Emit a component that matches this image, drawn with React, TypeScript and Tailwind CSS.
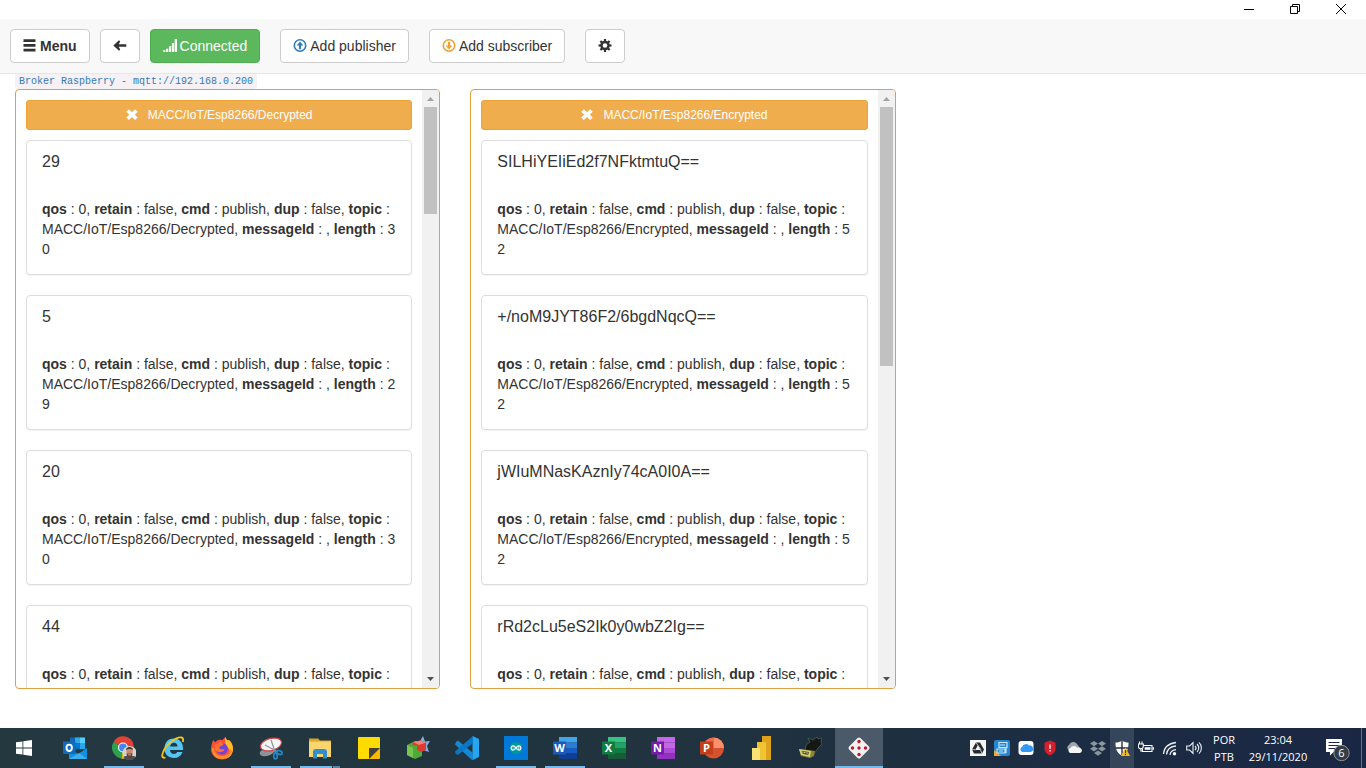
import React from "react";

type Message = { payload: string; length: number };
type Subscription = { topic: string; thumb: string; messages: Message[] };

const subscriptions: Subscription[] = [
  {
    topic: "MACC/IoT/Esp8266/Decrypted",
    thumb: "h-[19%]",
    messages: [
      { payload: "29", length: 30 },
      { payload: "5", length: 29 },
      { payload: "20", length: 30 },
      { payload: "44", length: 30 },
    ],
  },
  {
    topic: "MACC/IoT/Esp8266/Encrypted",
    thumb: "h-[46%]",
    messages: [
      { payload: "SILHiYEIiEd2f7NFktmtuQ==", length: 52 },
      { payload: "+/noM9JYT86F2/6bgdNqcQ==", length: 52 },
      { payload: "jWIuMNasKAznIy74cA0I0A==", length: 52 },
      { payload: "rRd2cLu5eS2Ik0y0wbZ2Ig==", length: 52 },
    ],
  },
];

function Glyph({ children, className = "size-[14px]" }: { children: React.ReactNode; className?: string }) {
  return (
    <svg viewBox="0 0 14 14" aria-hidden="true" className={"shrink-0 " + className}>
      {children}
    </svg>
  );
}

const BurgerGlyph = () => (
  <Glyph>
    <path fill="currentColor" d="M.5.3h12v2.800h-12zM.5 5h12v2.800h-12zM.5 9.700h12v2.800h-12z" />
  </Glyph>
);
const ArrowLeftGlyph = () => (
  <Glyph>
    <path fill="currentColor" d="M.3 6.500 6 1.300 7.200 2.400 5.700 5.200h7.600v2.600H5.700l1.500 2.800L6 11.700z" />
  </Glyph>
);
const SignalGlyph = () => (
  <Glyph>
    <path fill="currentColor" d="M.2 11.2h2.200v1.800H.2zM3.100 9.700h2.200V13H3.100zM6 7.300h2.200V13H6zM8.900 4h2.200v9H8.900zM11.700 0H14v13h-2.300z" />
  </Glyph>
);
const UploadGlyph = () => (
  <Glyph className="size-[14px] text-[#337ab7]">
    <circle cx="7" cy="6.500" r="5.700" fill="none" stroke="currentColor" strokeWidth="1.600" />
    <path fill="currentColor" d="M7 2.500 10.300 6.500H8.100v3.700H5.900V6.500H3.700z" />
  </Glyph>
);
const DownloadGlyph = () => (
  <Glyph className="size-[14px] text-[#eea236]">
    <circle cx="7" cy="6.500" r="5.700" fill="none" stroke="currentColor" strokeWidth="1.600" />
    <path fill="currentColor" d="M7 10.500 10.300 6.500H8.100V2.800H5.900v3.700H3.700z" />
  </Glyph>
);
const CogGlyph = () => (
  <Glyph>
    <g fill="currentColor">
      <path d="M5.900 0h2.200v13H5.900z" />
      <path d="M5.900 0h2.200v13H5.900z" transform="rotate(45 7 6.500)" />
      <path d="M5.900 0h2.200v13H5.900z" transform="rotate(90 7 6.500)" />
      <path d="M5.900 0h2.200v13H5.900z" transform="rotate(135 7 6.500)" />
      <circle cx="7" cy="6.500" r="4.800" />
    </g>
    <circle cx="7" cy="6.500" r="2.300" fill="#fff" />
  </Glyph>
);
const RemoveGlyph = () => (
  <Glyph className="size-3">
    <path fill="currentColor" d="M3.300.300 7 3.800 10.700.300l3 3L10.200 6.500l3.500 3.300-3 3L7 9.300l-3.700 3.500-3-3L3.800 6.500.300 3.300z" />
  </Glyph>
);

const btn = "flex h-[34px] items-center gap-[3px] rounded border px-3 text-sm whitespace-nowrap";
const plain = "border-[#ccc] bg-white text-[#333]";

function WindowBar() {
  const cell = "flex w-[46px] items-center justify-center";
  return (
    <div className="flex h-[17px] shrink-0 items-stretch justify-end bg-white pr-[2px] text-black">
      <button aria-label="Minimize" className={cell}>
        <svg viewBox="0 0 10 10" className="size-[10px]"><path d="M0 5.500h10" stroke="currentColor" /></svg>
      </button>
      <button aria-label="Restore" className={cell}>
        <svg viewBox="0 0 10 10" className="size-[10px]">
          <path d="M.5 2.500h7v7h-7zM2.500 2.500v-2h7v7h-2" fill="none" stroke="currentColor" />
        </svg>
      </button>
      <button aria-label="Close" className={cell}>
        <svg viewBox="0 0 10 10" className="size-[10px]"><path d="m0 0 10 10M10 0 0 10" stroke="currentColor" /></svg>
      </button>
    </div>
  );
}

function Toolbar() {
  return (
    <nav className="mt-[2px] flex shrink-0 items-center gap-5 border-b border-[#e7e7e7] bg-[#f8f8f8] px-[10px] py-[10px]">
      <div className="flex gap-[10px]">
        <button className={`${btn} ${plain} font-bold`}><BurgerGlyph />Menu</button>
        <button aria-label="Back" className={`${btn} ${plain}`}><ArrowLeftGlyph /></button>
        <button className={`${btn} border-[#4cae4c] bg-[#5cb85c] text-white`}><SignalGlyph />Connected</button>
      </div>
      <button className={`${btn} ${plain}`}><UploadGlyph />Add publisher</button>
      <button className={`${btn} ${plain}`}><DownloadGlyph />Add subscriber</button>
      <button aria-label="Settings" className={`${btn} ${plain}`}><CogGlyph /></button>
    </nav>
  );
}

function MessageCard({ topic, message }: { topic: string; message: Message }) {
  return (
    <article className="rounded border border-[#ddd] bg-white px-[15px] pt-[11px] pb-[15px] shadow-[0_1px_1px_rgba(0,0,0,0.05)]">
      <h4 className="text-base leading-5">{message.payload}</h4>
      <p className="mt-[27px] text-sm leading-5 break-all">
        <b>qos</b> : 0, <b>retain</b> : false, <b>cmd</b> : publish, <b>dup</b> : false, <b>topic</b>
        {` : ${topic}, `}
        <b>messageId</b> : , <b>length</b>
        {` : ${message.length}`}
      </p>
    </article>
  );
}

function SubscriptionPanel({ sub }: { sub: Subscription }) {
  return (
    <section className="mx-[15px] flex min-h-0 overflow-hidden rounded border border-[#e0a041]">
      <div className="min-w-0 flex-1 overflow-y-auto p-[10px] [scrollbar-width:none]">
        <button className="flex h-[30px] w-full items-center justify-center gap-[10px] rounded-[3px] border border-[#eea236] bg-[#f0ad4e] text-xs text-white">
          <RemoveGlyph />{sub.topic}
        </button>
        <div className="mt-[10px] flex flex-col gap-5">
          {sub.messages.map((m) => <MessageCard key={m.payload} topic={sub.topic} message={m} />)}
        </div>
      </div>
      <div aria-hidden="true" className="flex w-[17px] shrink-0 flex-col bg-[#f1f1f1]">
        <svg viewBox="0 0 17 17" className="size-[17px] shrink-0"><path d="M5 11h7L8.500 7z" fill="#a3a3a3" /></svg>
        <div className="min-h-0 flex-1 px-[2px]"><div className={`${sub.thumb} bg-[#c1c1c1]`} /></div>
        <svg viewBox="0 0 17 17" className="size-[17px] shrink-0"><path d="M5 6h7l-3.500 4z" fill="#505050" /></svg>
      </div>
    </section>
  );
}

function Icon({ children }: { children: React.ReactNode }) {
  return <svg viewBox="0 0 24 24" aria-hidden="true" className="size-6 shrink-0">{children}</svg>;
}

const iconText = { fontFamily: "Open Sans, sans-serif", fontWeight: 700, fill: "#fff", textAnchor: "middle" as const };

function OfficeIcon({ letter, tile, bands }: { letter: string; tile: string; bands: [string, string, string, string] }) {
  return (
    <Icon>
      <path d="M6 1h18v5.500H6z" fill={bands[0]} />
      <path d="M6 6.500h18v5.500H6z" fill={bands[1]} />
      <path d="M6 12h18v5.500H6z" fill={bands[2]} />
      <path d="M6 17.500h18V23H6z" fill={bands[3]} />
      <path d="M0 5.500h13v13H0z" fill={tile} />
      <text x="6.500" y="16" fontSize="11" {...iconText}>{letter}</text>
    </Icon>
  );
}

const StartIcon = () => (
  <svg viewBox="0 0 16 16" aria-hidden="true" className="size-4">
    <path fill="#fff" d="M0 2.300 6.500 1.400v6.200H0zM7.300 1.300 16 0v7.600H7.300zM0 8.400h6.500v6.200L0 13.700zM7.300 8.400H16V16l-8.700-1.300z" />
  </svg>
);
const OutlookIcon = () => (
  <Icon>
    <path d="M7 1.500h15v12H7z" fill="#1066b5" />
    <path d="M12 1.500h5V7h-5z" fill="#32a9e7" /><path d="M17 1.500h5V7h-5z" fill="#50d0ff" />
    <path d="M12 7h5v5h-5z" fill="#0078d4" /><path d="M17 7h5v6h-5z" fill="#28a8ea" />
    <path d="M6 12 15 18l9-6v11H6z" fill="#1490df" /><path d="m6 23 10-6 8 6z" fill="#38b1ee" />
    <path d="M0 5.500h12.500V18H0z" fill="#0f6cbd" />
    <ellipse cx="6.200" cy="11.800" rx="2.700" ry="3.200" fill="none" stroke="#fff" strokeWidth="1.900" />
  </Icon>
);
const ChromeIcon = () => (
  <Icon>
    <path d="M11 11.500 1.500 6A11 11 0 0 1 21 6.500L22 12z" fill="#e34133" />
    <path d="M11 11.500H22A11 11 0 0 1 9 22.500z" fill="#fbc116" />
    <path d="M11 11.500 10 22.500A11 11 0 0 1 1.500 6z" fill="#30a04f" />
    <circle cx="11" cy="11.500" r="5" fill="#fff" /><circle cx="11" cy="11.500" r="3.900" fill="#4285f4" />
    <circle cx="17.500" cy="17" r="7" fill="#d5d3cc" />
    <path d="M11.500 21c2-2 10-2 12 0a7 7 0 0 1-12 0z" fill="#495057" />
    <path d="M14.300 14.500c0-4 6.500-4 6.500 0l-.5 4.500-2.700 2.500-2.700-2.500z" fill="#c58e72" />
    <path d="M14.500 17.500h6l-1 4-2 1.500-2-1.500z" fill="#63402f" />
    <path d="M14 14c0-4 7-4 7 0-1-1.500-6-1.500-7 0z" fill="#4b3126" />
    <path d="M16 18.800h3" stroke="#d99b87" />
  </Icon>
);
const ExplorerEIcon = () => (
  <Icon>
    <path fill="#55c5f1" d="M12.500 2.500c-6 0-9 4.500-9 10 0 6 4 9.500 9.500 9.500 4 0 7-2 8.500-6h-5.200c-.8 1.300-1.900 1.900-3.300 1.900-2.400 0-4-1.500-4-3.900h13c.7-7-3.200-11.500-9.500-11.500zM9.200 10.500c.3-2.400 1.700-3.800 3.700-3.800 2.200 0 3.500 1.400 3.700 3.800z" />
    <path fill="none" stroke="#f5c51a" strokeWidth="1.800" d="M4.500 21.500C1 22.500.5 20 2 16.500 4.500 8 16 .5 20.500 1.500c1.800.4 2 2 1.200 4.500" />
  </Icon>
);
const FirefoxIcon = () => (
  <Icon>
    <path fill="#ff4f35" d="M2 7.500 3 4l2.300 2.200C8 3 10 3.500 12.500 4L15.500.7c.3 2 1.200 3 2.500 4l.5-1C21.500 6 23 9 23 13c0 6-5 10.500-11 10.500S1 19 1 13c0-2 .3-3.800 1-5.500z" />
    <path fill="#ffbd27" d="M15.500.7c.3 2 1.200 3 2.500 4l.5-1C21.500 6 23 9 23 13c0 3.500-2 7-5 8.800 2-4 2.200-8 0-10.300-1.500-2-4-4-2.500-10.800z" />
    <path fill="#ff9028" d="M4 12c0 6 5.500 9 11 7.500 4-1 5.500-4 5.500-7l1.500 2c0 5-4 8.500-10 8.500S1.500 18.500 2 12z" />
    <circle cx="12" cy="12.800" r="5.800" fill="#7542d8" />
    <path fill="#ff7132" d="M5 9c3-1 4-2.500 5.500-4 .2 1.500 1 2.200 3 2.600-.2 1.500-1 2-3 2.600-1.500.5-1.500 2-.5 2.700 1.500 1 3-.3 4.500.6-1.500 3-6 3.700-8.500 1.100C4.500 13 4.500 11 5 9z" />
  </Icon>
);
const SnipIcon = () => (
  <Icon>
    <ellipse cx="8" cy="16" rx="7.500" ry="4" fill="#8c9296" transform="rotate(-15 8 16)" />
    <ellipse cx="12" cy="8.500" rx="10.800" ry="6" fill="#f7f7f7" stroke="#cf4349" strokeWidth="1.200" transform="rotate(-15 12 8.500)" />
    <path d="m6 9 13 7M12 4l4.500 13" stroke="#8b969d" strokeWidth="1.200" />
    <ellipse cx="20.500" cy="16.500" rx="2.900" ry="1.800" fill="none" stroke="#2387c8" strokeWidth="1.700" transform="rotate(25 20.500 16.500)" />
    <ellipse cx="16.500" cy="20" rx="1.800" ry="2.900" fill="none" stroke="#2387c8" strokeWidth="1.700" />
  </Icon>
);
const FolderIcon = () => (
  <Icon>
    <path d="M1 2.500h9l2 2h11v4H1z" fill="#d9a628" /><path d="M1 5.500h22V21H1z" fill="#f9d56e" />
    <path d="M5 22.500V16q0-3 3-3h8q3 0 3 3v6.500h-4V18H9v4.500z" fill="#318fd0" />
  </Icon>
);
const NotesIcon = () => (
  <Icon>
    <path d="M2 1h20a1 1 0 0 1 1 1v10H12v11H2a1 1 0 0 1-1-1V2a1 1 0 0 1 1-1z" fill="#ffdc00" />
    <path d="M12 12h11L12 23z" fill="#444238" /><path d="M23 12v10a1 1 0 0 1-1 1H12z" fill="#fdb900" />
  </Icon>
);
const CubesIcon = () => (
  <Icon>
    <path d="m17 0 2 5.500 5-.5-3 5 2 6-6-2-6 1 1-6-4-4h6z" fill="#86addf" />
    <path d="m1 9 6-3 5 2v4l4 1.500V20l-7 3-8-4z" fill="#4eaa38" /><path d="m1 9 6 3v10l-6-3z" fill="#77c451" />
    <path d="m7 6 8-1.500 5 2V14l-5 2-4-2v-4L6.500 9z" fill="#dc3c30" /><path d="m7 6 8-1.500 5 2L13 9z" fill="#f38372" />
  </Icon>
);
const CodeIcon = () => (
  <Icon>
    <path d="M17.500 0 24 3v18l-6.500 3z" fill="#25a5f2" />
    <path d="m1 6 2-1.500L18 17v7h-1L0 8.500z" fill="#1688d2" /><path d="m0 15.500 17.500-15H18V7L3 19l-2.500-1.500z" fill="#0878c5" />
  </Icon>
);
const ArduinoIcon = () => (
  <Icon>
    <path d="M0 0h24v24H0z" fill="#0078d7" /><circle cx="12" cy="12" r="6.300" fill="#00979d" />
    <path d="M12 12c-2-3-4.800-2.400-4.800 0S10 15 12 12s4.800-2.400 4.800 0S14 15 12 12z" fill="none" stroke="#fff" strokeWidth="1.300" />
    <path d="M8.500 12h1.800M13.800 12h1.800M14.700 11.100v1.800" stroke="#fff" strokeWidth=".6" />
  </Icon>
);
const PowerPointIcon = () => (
  <Icon>
    <circle cx="13.500" cy="12" r="10.500" fill="#d35230" /><path d="M13.500 1.500A10.500 10.500 0 0 1 24 12H13.500z" fill="#ff8f6b" />
    <path d="M3 12h10.500V1.500A10.500 10.500 0 0 0 3 12z" fill="#ed6c47" />
    <path d="M0 5.500h13v13H0z" fill="#c43e1c" /><text x="6.500" y="16" fontSize="11" {...iconText}>P</text>
  </Icon>
);
const PowerBiIcon = () => (
  <Icon>
    <path d="M13 0h9v24h-9z" fill="#dfa21c" /><path d="M8 6h9v18H8z" fill="#f0c431" /><path d="M3 12h8v12H3z" fill="#fae272" />
  </Icon>
);
const SerialIcon = () => (
  <Icon>
    <path d="m8 9 4-3-2-4 5 2 4-3 1 2 4-1-1 4 1 2-4 4-4 6-9-3z" fill="#141915" stroke="#607052" strokeWidth=".6" />
    <path d="m1 13 9 1 7 1-1 5-4 2-9-2z" fill="#8a8535" /><path d="m1 13 12 2-1 6-9-2z" fill="#d5cf76" />
    <path d="m3.500 14.700 7.500 1.300-.8 3-5.500-1.300z" fill="#514f24" />
    <path d="m4.500 16 5.500 1.200" stroke="#e4df9b" strokeDasharray="1 .6" />
  </Icon>
);
const DiceIcon = () => (
  <Icon>
    <rect x="4" y="4" width="16" height="16" rx="2" fill="#f3f0f0" transform="rotate(45 12 12)" />
    <g fill="#be1631"><circle cx="12" cy="5.500" r="1.700" /><circle cx="5.500" cy="12" r="1.700" /><circle cx="12" cy="12" r="1.700" /><circle cx="18.500" cy="12" r="1.700" /><circle cx="12" cy="18.500" r="1.700" /></g>
  </Icon>
);

type TaskApp = { name: string; icon: React.ReactNode; state?: "open" | "stacked" | "active" };
const apps: TaskApp[] = [
  { name: "Outlook", icon: <OutlookIcon /> },
  { name: "Chrome", icon: <ChromeIcon />, state: "open" },
  { name: "Internet Explorer", icon: <ExplorerEIcon /> },
  { name: "Firefox", icon: <FirefoxIcon /> },
  { name: "Snipping Tool", icon: <SnipIcon />, state: "open" },
  { name: "File Explorer", icon: <FolderIcon />, state: "stacked" },
  { name: "Sticky Notes", icon: <NotesIcon /> },
  { name: "Cubes", icon: <CubesIcon /> },
  { name: "Visual Studio Code", icon: <CodeIcon /> },
  { name: "Arduino", icon: <ArduinoIcon />, state: "open" },
  { name: "Word", icon: <OfficeIcon letter="W" tile="#185abd" bands={["#41a5ee", "#2b7cd3", "#185abd", "#103f91"]} />, state: "open" },
  { name: "Excel", icon: <OfficeIcon letter="X" tile="#107c41" bands={["#33c481", "#21a366", "#107c41", "#185c37"]} /> },
  { name: "OneNote", icon: <OfficeIcon letter="N" tile="#7719aa" bands={["#ca64ea", "#c466e5", "#ae4bd5", "#9332bf"]} /> },
  { name: "PowerPoint", icon: <PowerPointIcon /> },
  { name: "Power BI", icon: <PowerBiIcon /> },
  { name: "Serial Port", icon: <SerialIcon /> },
  { name: "MQTT client", icon: <DiceIcon />, state: "active" },
];

function TaskButton({ app }: { app: TaskApp }) {
  return (
    <button
      aria-label={app.name}
      className={`flex w-12 shrink-0 flex-col items-center ${app.state === "active" ? "bg-[#4a5a68]" : ""}`}
    >
      <span className="flex flex-1 items-center pt-[2px]">{app.icon}</span>
      {app.state === "open" && <span className="h-[2px] w-10 bg-[#76b9ed]" />}
      {app.state === "active" && <span className="h-[2px] w-full bg-[#76b9ed]" />}
      {app.state === "stacked" && (
        <span className="flex h-[2px] w-10 gap-px"><span className="flex-1 bg-[#76b9ed]" /><span className="w-[7px] bg-[#5586ab]" /></span>
      )}
      {!app.state && <span className="h-[2px]" />}
    </button>
  );
}

const tray: { name: string; lit?: boolean; art: React.ReactNode }[] = [
  { name: "Drive", art: <><path d="M0 0h16v16H0z" fill="#f5f5f5" /><path d="M6 2.500h4l4 7-2 4H4l-2-4zM7.900 5.300l-2.600 4.600h5.300z" fill="#252b30" fillRule="evenodd" /><path d="m6 2.500 5 7.400M2 9.500l3.500.3M12 13.500l-1.500-3.600" stroke="#f5f5f5" strokeWidth=".7" /></> },
  { name: "Remote", art: <><rect width="16" height="16" rx="2" fill="#2687d0" /><path d="M0 10v6h7z" fill="#e8a83a" /><path d="M5 2.500h8v5H5zM3 9h8v4H3zM6 5h5M5 11h4M12 8v5" fill="none" stroke="#c5e9fa" strokeWidth="1.200" /></> },
  { name: "iCloud", art: <><rect x=".5" y="1" width="15" height="14" rx="3" fill="#fff" /><path d="M4.500 12a2.700 2.700 0 0 1-.3-5.200A4 4 0 0 1 11 5.500a3.300 3.300 0 0 1 1.500 6.500z" fill="#3498f3" /></> },
  { name: "Antivirus", art: <><path d="m8 .5 5.500 2.300v6.500c0 3-3 5-5.500 6.200C5.500 14.300 2.500 12.300 2.500 9.300V2.800z" fill="#d41f2d" /><path d="M8 4.500v4.300M8 10v1.500" stroke="#fff" strokeWidth="1.300" /></> },
  { name: "OneDrive", art: <><path d="M2.500 10A3 3 0 0 1 3 5a4.500 4.500 0 0 1 8-1l3 4-9 4z" fill="#a1a6ab" /><path d="M4 13a2.700 2.700 0 0 1 .5-5A4 4 0 0 1 11 7.500c5-1 6.500 4.500 3 5.500z" fill="#f5f5f5" /></> },
  { name: "Dropbox", art: <path d="m4 1 4 2.600-4 2.600-4-2.600zM12 1l4 2.600-4 2.600-4-2.600zM4 6.200l4 2.600-4 2.600-4-2.600zM12 6.200l4 2.600-4 2.600-4-2.600zM8 10.500l4 2.600-4 2.600-4-2.600z" fill="#8a959e" /> },
  { name: "Security", lit: true, art: <><path d="M8 .5c2 1.500 4 2 6.500 2 0 6-1 10.500-6.500 13-5.500-2.500-6.500-7-6.500-13 2.500 0 4.500-.5 6.500-2z" fill="#fff" /><path d="M8 .5v15M1.500 8h13" stroke="#26323f" strokeWidth="1.400" /><path d="M11.500 7.500 16 16H7z" fill="#f6bd22" /><path d="M11.500 10.300v3M11.500 14v1.200" stroke="#26323f" strokeWidth="1.100" /></> },
  { name: "Battery", art: <><path d="M5.500 5.500H14v6H4.500V9M1.500 1.500v2.500M4 1.500v2.500M2.800 8.500V11h1.700" fill="none" stroke="#fff" strokeWidth="1.100" /><path d="M.3 4h5v2.300a2.500 2.500 0 0 1-5 0z" fill="none" stroke="#fff" strokeWidth="1.100" /><path d="M6.700 7.200h5.800v2.600H6.700zM14.600 7.200H16v2.600h-1.400z" fill="#fff" /></> },
  { name: "Wi-Fi", art: <><path d="M1.500 14C2 8 6 3.500 14 2.500M4.500 14.500C5 9.500 8 6.500 14 6M8 15c.4-3 2.300-5 6-5.300" fill="none" stroke="#e5e9ed" strokeWidth="1.300" /><circle cx="12.500" cy="13.700" r="1.700" fill="#fff" /></> },
  { name: "Volume", art: <path d="M.7 6h3L7 2.700v10.600L3.700 10h-3zM9 5.800c1.300 1.300 1.300 3.100 0 4.400M11 4c2.300 2.300 2.300 5.700 0 8M13 2.300c3.200 3.200 3.200 8.200 0 11.400" fill="none" stroke="#e9edf2" strokeWidth="1.100" /> },
];

function Taskbar() {
  return (
    <footer className="flex h-10 shrink-0 bg-gradient-to-r from-[#23383f] via-[#20333f] to-[#1a2744] text-white">
      <button aria-label="Start" className="flex w-12 shrink-0 items-center justify-center"><StartIcon /></button>
      <div className="ml-[3px] flex gap-px">
        {apps.map((a) => <TaskButton key={a.name} app={a} />)}
      </div>
      <div className="ml-auto flex shrink-0">
        {tray.map((t) => (
          <button key={t.name} aria-label={t.name} className={`flex w-6 items-center justify-center ${t.lit ? "bg-[#35455a]" : ""}`}>
            <svg viewBox="0 0 16 16" className="size-4">{t.art}</svg>
          </button>
        ))}
      </div>
      <div className="flex shrink-0 text-center font-['Open_Sans',sans-serif] text-[11px] leading-[17px]">
        <button className="w-9">POR<br />PTB</button>
        <button className="w-[72px]">23:04<br />29/11/2020</button>
      </div>
      <button aria-label="Notifications" className="flex w-12 shrink-0 items-center justify-center border-r border-[#66718a] pt-1">
        <svg viewBox="0 0 26 24" className="h-6 w-[26px]">
          <path d="M1 1h16v13H8.500L5 17.500V14H1z" fill="#fff" />
          <path d="M3.500 4.500h11M3.500 7.500h11M3.500 10.500h11" stroke="#1b2944" />
          <circle cx="16.500" cy="15" r="7.700" fill="#343c46" stroke="#8a929d" />
          <text x="16.500" y="19" fontSize="11" fill="#fff" textAnchor="middle" fontFamily="Open Sans, sans-serif">6</text>
        </svg>
      </button>
      <div className="w-1 shrink-0" />
    </footer>
  );
}

export default function App() {
  return (
    <div className="flex h-screen flex-col overflow-hidden bg-white font-['Liberation_Sans',Arial,sans-serif] text-[#333]">
      <WindowBar />
      <Toolbar />
      <main className="flex min-h-0 flex-1 flex-col pb-[39px]">
        <div className="flex h-[15px] shrink-0 px-[15px]">
          <code className="rounded-b bg-[#f5f1f5] px-1 font-['Liberation_Mono',monospace] text-[10px] leading-[15px] text-[#337ab7]">
            Broker Raspberry - mqtt://192.168.0.200
          </code>
        </div>
        <div className="grid min-h-0 flex-1 grid-cols-3 grid-rows-[minmax(0,1fr)]">
          {subscriptions.map((s) => <SubscriptionPanel key={s.topic} sub={s} />)}
        </div>
      </main>
      <Taskbar />
    </div>
  );
}
